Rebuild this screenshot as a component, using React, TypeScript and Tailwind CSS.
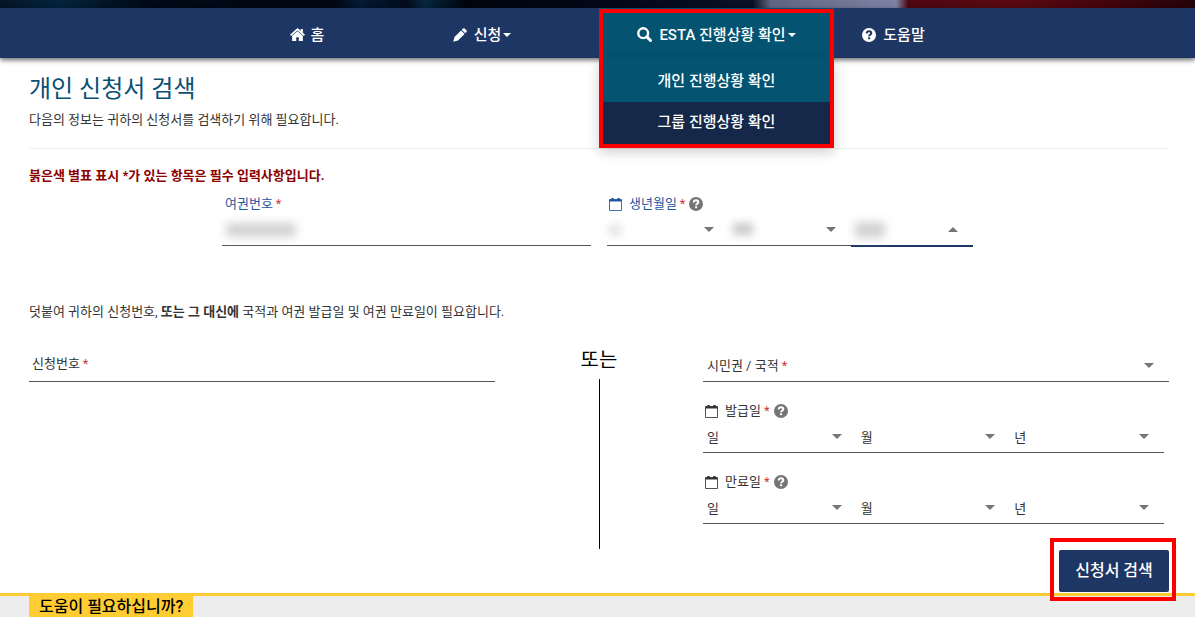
import type { ReactNode } from 'react';

interface DatePartProps {
  id: string;
  label: string;
  open?: boolean;
  children?: ReactNode;
}

function HomeIcon() {
  return (
    <svg viewBox="0 0 14 12" className="w-[15px] h-[13px]" fill="currentColor" aria-hidden="true">
      <path d="M7 0 0 6.2l1 1.2L7 2.2l6 5.2 1-1.2-2-1.8V.8h-2v1.8z" />
      <path d="M7 2.9 2 7.2V12h3.8V8.6h2.4V12H12V7.2z" />
    </svg>
  );
}

function PencilIcon() {
  return (
    <svg viewBox="0 0 14 14" className="w-[14px] h-[14px]" fill="currentColor" aria-hidden="true">
      <path d="M9.9.6a1.3 1.3 0 0 1 1.8 0l1.7 1.7a1.3 1.3 0 0 1 0 1.8l-1.2 1.2-3.5-3.5z" />
      <path d="m8.1 2.4 3.5 3.5-6.6 6.6L.2 13.8l1.3-4.8z" />
    </svg>
  );
}

function SearchIcon() {
  return (
    <svg viewBox="0 0 15 15" className="w-[15px] h-[15px]" fill="none" stroke="currentColor" aria-hidden="true">
      <circle cx="6.2" cy="6.2" r="4.9" strokeWidth="2.4" />
      <path d="m9.9 9.9 3.6 3.6" strokeWidth="3" strokeLinecap="round" />
    </svg>
  );
}

function QuestionIcon({ mark }: { mark: string }) {
  return (
    <svg viewBox="0 0 14 14" className="w-[14px] h-[14px]" aria-hidden="true">
      <circle cx="7" cy="7" r="7" fill="currentColor" />
      <path d="M4.7 5.5c0-1.5 1-2.2 2.3-2.2s2.3.7 2.3 1.9c0 1.6-2.2 1.5-2.2 3.1" fill="none" stroke={mark} strokeWidth="2" />
      <path d="M6.1 9.2h2v2h-2z" fill={mark} />
    </svg>
  );
}

function CalendarIcon() {
  return (
    <svg viewBox="0 0 13 14" className="w-[13px] h-[14px]" fill="none" stroke="currentColor" aria-hidden="true">
      <path d="M.5 2.5h12v11H.5z" opacity="0.85" />
      <path d="M.5 3.5h12" strokeWidth="2" />
      <path d="M3.5 1v3M9.5 1v3" strokeWidth="2.4" />
    </svg>
  );
}

function Caret() {
  return <span className="border-x-4 border-t-4 border-x-transparent border-t-white" />;
}

function Arrow({ up }: { up?: boolean }) {
  return (
    <svg
      viewBox="0 0 10 5"
      className={`pointer-events-none absolute right-[15px] top-[13px] w-[10px] h-[5px] text-[#757575] ${up ? 'rotate-180' : ''}`}
      fill="currentColor"
      aria-hidden="true"
    >
      <path d="M0 0h10L5 5z" />
    </svg>
  );
}

function Star() {
  return <span className="ml-[3px] text-[#d03a3a]">*</span>;
}

function DatePart({ id, label, open, children }: DatePartProps) {
  return (
    <div className={`relative flex-1 ${open ? 'h-[33px] border-b-2 border-[#1d3663]' : 'h-8 border-b border-[#555]'}`}>
      <select id={id} aria-label={label} className="h-full w-full appearance-none bg-transparent pl-1 pt-[2px] text-[13px] text-[#333] outline-none">
        <option>{children ? '' : label}</option>
      </select>
      {children}
      <Arrow up={open} />
    </div>
  );
}

function DateLabel({ id, text }: { id: string; text: string }) {
  return (
    <div className="flex h-5 items-center pl-[2px]">
      <CalendarIcon />
      <label htmlFor={id} className="ml-[7px]">
        {text}
        <Star />
      </label>
      <button type="button" aria-label={`${text} 도움말`} className="ml-1 text-[#757575]">
        <QuestionIcon mark="#fff" />
      </button>
    </div>
  );
}

function DateField({ id, text }: { id: string; text: string }) {
  return (
    <div className="mt-[19px] mr-[5px]">
      <DateLabel id={id} text={text} />
      <div className="flex">
        <DatePart id={id} label="일" />
        <DatePart id={`${id}-month`} label="월" />
        <DatePart id={`${id}-year`} label="년" />
      </div>
    </div>
  );
}

export default function App() {
  return (
    <div className="flex min-h-screen flex-col bg-white font-['Roboto','Noto_Sans_CJK_KR',sans-serif] text-[13px] leading-5 text-[#333]">
      {/* Bottom edge of the banner */}
      <div className="h-2 bg-[linear-gradient(90deg,#041527_0%,#03233b_5%,#020a18_12%,#010613_28%,#041a35_30%,#020b1b_34%,#06273f_35.5%,#01040e_39%,#020817_50%,#0a1026_63%,#5f6682_64.5%,#7c83a4_75%,#4d0710_76%,#5a0912_85%,#42040b_93%,#240309_100%)]" />

      <nav className="relative z-10 flex h-[50px] justify-center bg-[#1d3663] pl-[7px] text-[15px] font-medium text-white shadow-[0_2px_5px_rgba(0,0,0,0.6)]">
        <a href="#home" className="flex w-[116px] items-center justify-center gap-[6px] pt-[3px]">
          <HomeIcon />
          홈
        </a>
        <button type="button" className="flex w-[234px] items-center justify-center pt-[3px] font-medium">
          <PencilIcon />
          <span className="ml-[7px] mr-[2px]">신청</span>
          <Caret />
        </button>
        <div className="relative w-[235px] bg-[#035371]">
          <button type="button" aria-expanded="true" className="flex h-full w-full items-center justify-center pt-[3px] font-medium">
            <SearchIcon />
            <span className="ml-[7px] mr-[2px]">ESTA 진행상황 확인</span>
            <Caret />
          </button>
          <div className="absolute inset-x-0 top-full text-center shadow-[0_6px_12px_rgba(0,0,0,0.2)]">
            <a href="#individual" className="block h-11 bg-[#035371] leading-[46px]">
              개인 진행상황 확인
            </a>
            <a href="#group" className="block h-11 bg-[#152849] leading-10">
              그룹 진행상황 확인
            </a>
          </div>
          <div className="pointer-events-none absolute inset-x-0 top-[1px] h-[139px] border-4 border-[#fa0000]" />
        </div>
        <a href="#help" className="flex w-[119px] items-center justify-center gap-[7px] pt-[3px]">
          <QuestionIcon mark="#1d3663" />
          도움말
        </a>
      </nav>

      <main className="pl-[29px] pr-[26px] pt-[15px]">
        <h1 className="text-2xl leading-8 text-[#0b4f73]">개인 신청서 검색</h1>
        <p className="mt-[5px]">다음의 정보는 귀하의 신청서를 검색하기 위해 필요합니다.</p>
        <hr className="mt-[18px] border-[#eee]" />
        <p className="mt-[17px] font-bold text-[#8b0000]">붉은색 별표 표시 *가 있는 항목은 필수 입력사항입니다.</p>

        <form>
          {/* Passport number and date of birth */}
          <div className="ml-[193px] mr-[196px] mt-2 grid h-[53px] grid-cols-[369fr_366fr] gap-4 text-[#1f57a4]">
            <div>
              <label htmlFor="passport" className="block pl-[3px]">
                여권번호
                <Star />
              </label>
              <div className="relative">
                <input id="passport" type="text" className="block h-8 w-full border-b border-[#555] bg-transparent px-1 outline-none" />
                <span className="pointer-events-none absolute left-1 top-[9px] h-[14px] w-[70px] bg-[#d2d2d2] blur-[5px]" />
              </div>
            </div>
            <div>
              <DateLabel id="birth" text="생년월일" />
              <div className="flex items-start">
                <DatePart id="birth" label="일">
                  <span className="pointer-events-none absolute left-[2px] top-[11px] h-[10px] w-3 bg-[#dedede] blur-[4px]" />
                </DatePart>
                <DatePart id="birth-month" label="월">
                  <span className="pointer-events-none absolute left-1 top-[9px] h-3 w-5 bg-[#c8c8c8] blur-[4px]" />
                </DatePart>
                <DatePart id="birth-year" label="년" open>
                  <span className="pointer-events-none absolute left-1 top-[8px] h-4 w-[30px] bg-[#d2d2d2] blur-[5px]" />
                </DatePart>
              </div>
            </div>
          </div>

          <p className="mt-[55px]">
            덧붙여 귀하의 신청번호, <strong>또는 그 대신에</strong> 국적과 여권 발급일 및 여권 만료일이 필요합니다.
          </p>

          <div className="mt-[22px] grid grid-cols-[1fr_208px_1fr]">
            <div>
              <div className="flex h-[38px] items-center border-b border-[#555] pl-[3px] pt-[3px]">
                <label htmlFor="application">
                  신청번호
                  <Star />
                </label>
                <input id="application" type="text" className="h-full flex-1 bg-transparent px-1 outline-none" />
              </div>
            </div>

            <div className="flex flex-col items-center">
              <span className="pt-[2px] text-xl leading-7 text-black">또는</span>
              <div className="mt-[5px] w-px flex-1 bg-black" />
            </div>

            <div className="pb-[25px]">
              <div className="relative flex h-[38px] items-center border-b border-[#555] pl-1 pt-[6px]">
                <label htmlFor="citizenship">
                  시민권 / 국적
                  <Star />
                </label>
                <select id="citizenship" className="h-full flex-1 appearance-none bg-transparent outline-none">
                  <option></option>
                </select>
                <div className="absolute right-0 top-[6px]">
                  <Arrow />
                </div>
              </div>
              <DateField id="issued" text="발급일" />
              <DateField id="expires" text="만료일" />
            </div>
          </div>

          <div className="mt-px mb-px flex justify-end">
            <div className="relative">
              <button type="submit" className="h-[42px] w-[110px] rounded-[2px] bg-[#1d3663] text-base font-medium text-white">
                신청서 검색
              </button>
              <div className="pointer-events-none absolute -left-[9px] -right-[7px] -top-3 -bottom-[9px] border-4 border-[#fa0000]" />
            </div>
          </div>
        </form>
      </main>

      <footer className="flex flex-1 items-start border-t-3 border-[#ffcc33] bg-[#ededed] pl-[29px]">
        <h2 className="bg-[#ffcc33] px-[10px] pt-px text-base leading-5 font-medium text-black">도움이 필요하십니까?</h2>
      </footer>
    </div>
  );
}
